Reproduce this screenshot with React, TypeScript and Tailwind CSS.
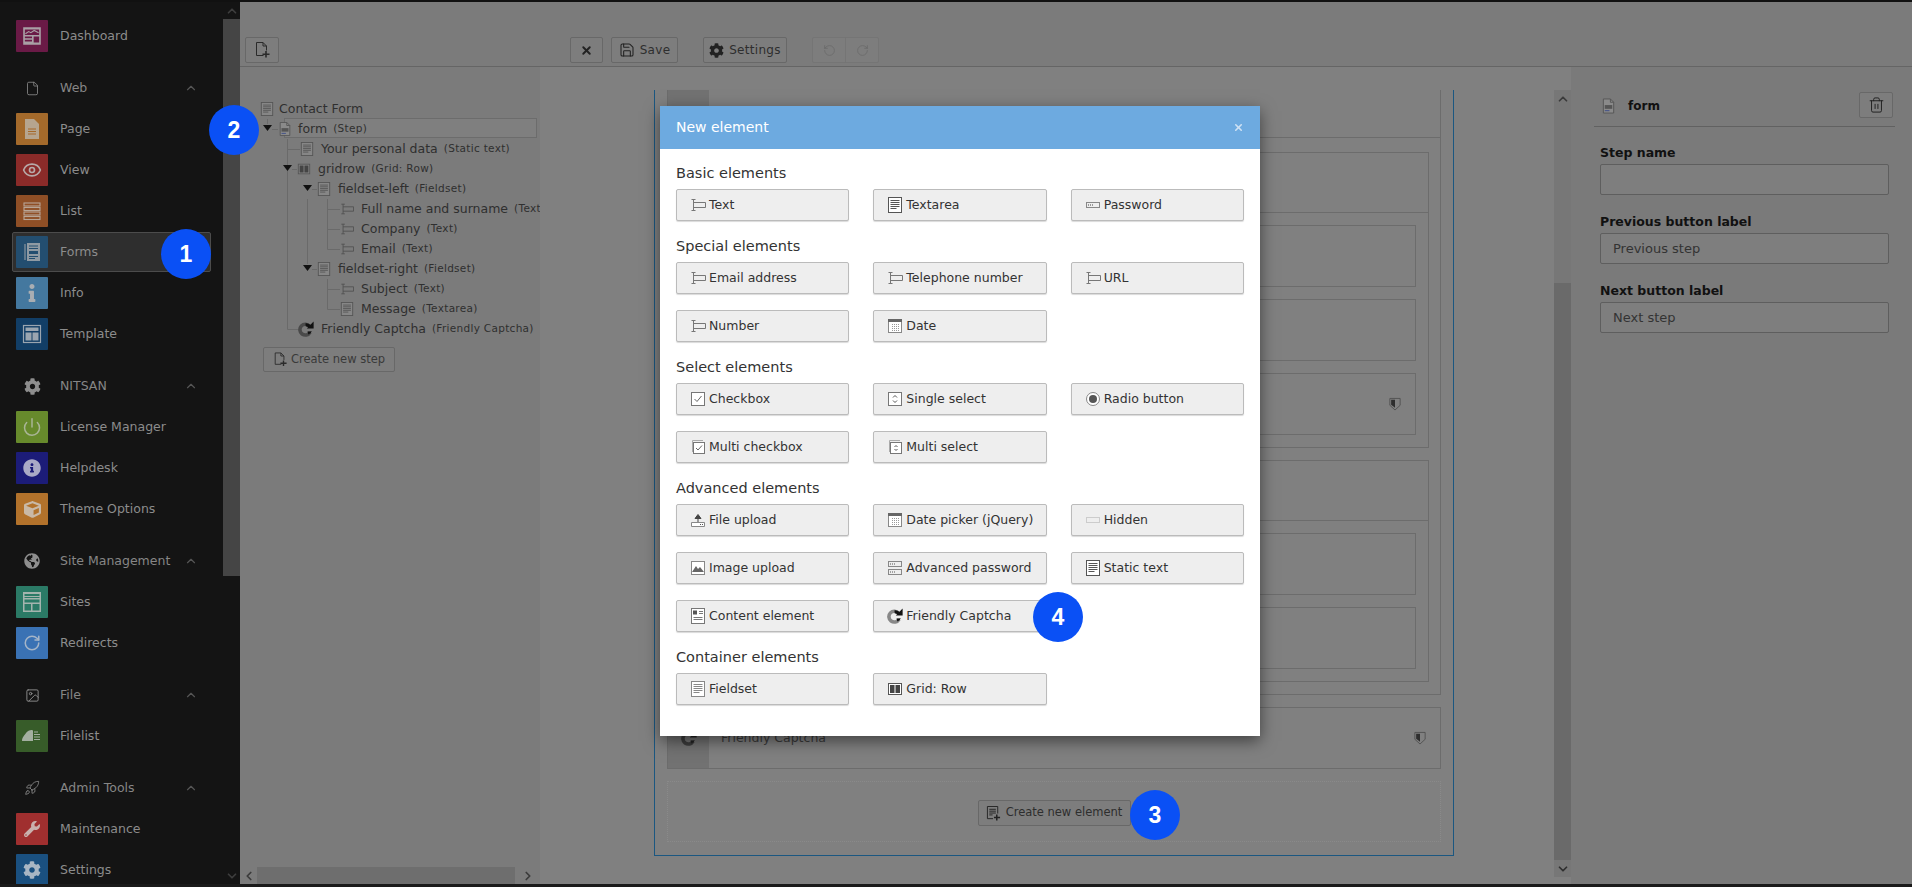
import React from 'react';
import { ChevronUp, ChevronDown, ChevronLeft, ChevronRight, Eye, File, Image, Power, RotateCcw, RotateCw, Rocket, Save, Trash2, X } from 'lucide-react';
import { FaCog, FaCube, FaGlobeAmericas, FaInfo, FaInfoCircle, FaWrench } from 'react-icons/fa';

const sans = "font-['DejaVu_Sans',sans-serif]";

type G = { className?: string };

// --- small form-element glyphs, 16 box ---
function IconField({ className, stroke = '#777' }: G & { stroke?: string }) {
  return (
    <svg viewBox="0 0 16 16" className={className} fill="none" stroke={stroke} strokeWidth="1">
      <path d="M3.5 5.5H15.5V10.5H3.5M3.5 2.5V13.5M1.5 2.5H5.5M1.5 13.5H5.5" />
    </svg>
  );
}
function IconLines({ className, dark, paper = '#fff' }: G & { dark?: boolean; paper?: string }) {
  const c = dark ? '#555' : '#888';
  return (
    <svg viewBox="0 0 16 16" className={className} fill="none" stroke={paper === '#fff' ? c : '#555'} strokeWidth="1">
      <rect x="1.5" y="0.5" width="13" height="15" fill={paper} />
      <path d="M3.5 3.5H12.5M3.5 5.5H12.5M3.5 7.5H12.5M3.5 9.5H12.5M3.5 11.5H9.5" />
    </svg>
  );
}
function IconPassword({ className }: G) {
  return (
    <svg viewBox="0 0 16 16" className={className} fill="none" stroke="#888" strokeWidth="1">
      <rect x="1.5" y="5.5" width="13" height="5" />
      <path d="M3 8H9" strokeDasharray="1 1" stroke="#444" />
    </svg>
  );
}
function IconDate({ className }: G) {
  return (
    <svg viewBox="0 0 16 16" className={className} fill="none">
      <rect x="1.5" y="1.5" width="13" height="13" fill="#fff" stroke="#888" />
      <rect x="1" y="1" width="14" height="3" fill="#666" />
      <path d="M5 6.5H13M5 8.5H13M5 10.5H13M5 12.5H13" stroke="#999" strokeDasharray="1 1" />
    </svg>
  );
}
function IconCheck({ className, multi }: G & { multi?: boolean }) {
  return (
    <svg viewBox="0 0 16 16" className={className} fill="none" stroke="#777">
      {multi && <path d="M2.5 13V1.5H13" stroke="#aaa" />}
      <rect x={multi ? 3.5 : 1.5} y={multi ? 3.5 : 1.5} width={multi ? 11 : 13} height={multi ? 11 : 13} fill="#fff" />
      <path d={multi ? 'M6 9L8 11L12 6.5' : 'M4.5 8L7 10.5L11.5 5'} stroke="#666" />
    </svg>
  );
}
function IconSelect({ className, multi }: G & { multi?: boolean }) {
  return (
    <svg viewBox="0 0 16 16" className={className} fill="none" stroke="#777">
      {multi && <path d="M2.5 13V1.5H13" stroke="#aaa" />}
      <rect x={multi ? 3.5 : 1.5} y={multi ? 3.5 : 1.5} width={multi ? 11 : 13} height={multi ? 11 : 13} fill="#fff" />
      <path d={multi ? 'M7.5 8L9 6.5L10.5 8M7.5 10L9 11.5L10.5 10' : 'M6 6.5L8 4.5L10 6.5M6 9.5L8 11.5L10 9.5'} stroke="#555" />
    </svg>
  );
}
function IconRadio({ className }: G) {
  return (
    <svg viewBox="0 0 16 16" className={className} fill="#fff" stroke="#888">
      <circle cx="8" cy="8" r="6.5" />
      <circle cx="8" cy="8" r="4" fill="#555" stroke="none" />
    </svg>
  );
}
function IconUpload({ className }: G) {
  return (
    <svg viewBox="0 0 16 16" className={className} fill="none" stroke="#888">
      <path d="M1.5 10.5V14.5H14.5V10.5H1.5" fill="#fff" />
      <path d="M8 10V4M5 6.5L8 2.5L11 6.5Z" stroke="#444" fill="#444" />
      <path d="M10 12.5H13" stroke="#555" strokeDasharray="1 1" />
    </svg>
  );
}
function IconHidden({ className }: G) {
  return (
    <svg viewBox="0 0 16 16" className={className} fill="none" stroke="#aaa">
      <rect x="1.5" y="5.5" width="13" height="5" strokeDasharray="1 1" />
    </svg>
  );
}
function IconPicture({ className }: G) {
  return (
    <svg viewBox="0 0 16 16" className={className} fill="none" stroke="#888">
      <rect x="1.5" y="1.5" width="13" height="13" fill="#fff" />
      <path d="M2 12L6 6L8 9L10 7L14 12Z" fill="#666" stroke="none" />
    </svg>
  );
}
function IconAdvPassword({ className }: G) {
  return (
    <svg viewBox="0 0 16 16" className={className} fill="none" stroke="#888">
      <rect x="1.5" y="1.5" width="13" height="5" />
      <rect x="1.5" y="9.5" width="13" height="5" />
      <path d="M3 4H8M3 12H8" stroke="#555" strokeDasharray="1 1" />
    </svg>
  );
}
function IconContent({ className }: G) {
  return (
    <svg viewBox="0 0 16 16" className={className} fill="none" stroke="#777">
      <rect x="1.5" y="0.5" width="13" height="15" fill="#fff" />
      <rect x="3" y="2.5" width="4" height="4" fill="#555" stroke="none" />
      <path d="M9 3.5H13M9 5.5H13M3.5 9.5H12.5M3.5 11.5H12.5" />
    </svg>
  );
}
function IconGrid({ className, paper = '#fff' }: G & { paper?: string }) {
  return (
    <svg viewBox="0 0 16 16" className={className} fill="none" stroke="#555">
      <rect x="1.5" y="2.5" width="13" height="11" fill={paper} />
      <rect x="3" y="4" width="4.5" height="8" fill="#444" stroke="none" />
      <rect x="8.5" y="4" width="4.5" height="8" fill="#444" stroke="none" />
    </svg>
  );
}
function IconCaptcha({ className, light = '#6a6a6a', dark = '#111' }: G & { light?: string; dark?: string }) {
  return (
    <svg viewBox="0 0 16 16" className={className} fill="none">
      <path d="M11.5 5.2A5.4 5.4 0 1 0 12 11.3" stroke={light} strokeWidth="3.6" />
      <path d="M7.6 4A5 5 0 0 1 11.5 5.2" stroke={dark} strokeWidth="3.2" />
      <path d="M15.6 0.6V7.6H8.8Z" fill={dark} />
      <path d="M9.5 10.4L13.8 10.2A5.4 5.4 0 0 1 10.4 13.6Z" fill={dark} />
    </svg>
  );
}
function IconPageForm({ className }: G) {
  return (
    <svg viewBox="0 0 16 16" className={className} fill="none" stroke="#555">
      <path d="M2.5 0.5H10L13.5 4V15.5H2.5Z" fill="#8a8a8a" />
      <path d="M10 0.5V4H13.5" />
      <rect x="4" y="7" width="8" height="4" fill="#555" stroke="none" />
      <path d="M4 13H9" stroke="#3a4a88" />
    </svg>
  );
}
function IconNewDoc({ className }: G) {
  return (
    <svg viewBox="0 0 16 16" className={className} fill="none" stroke="#2a2a2a" strokeWidth="1">
      <path d="M9.5 13.5H2.5V0.5H9L12.5 4V8.5M9 0.5V4H12.5" />
      <path d="M12 9V15.5M8.5 12.2H15.5" strokeWidth="1.6" />
    </svg>
  );
}
function IconNewElement({ className }: G) {
  return (
    <svg viewBox="0 0 16 16" className={className} fill="none" stroke="#222">
      <path d="M7.5 13.5H1.5V0.5H12.5V8M3.5 3.5H10.5M3.5 5.5H10.5M3.5 7.5H10.5M3.5 9.5H7" />
      <path d="M11.5 9V15.5M8.5 12.2H15" strokeWidth="1.6" />
    </svg>
  );
}
function IconShield({ className }: G) {
  return (
    <svg viewBox="0 0 14 16" className={className} fill="none" stroke="#4d4d4d">
      <path d="M1 1.5H13V9.5L7 15L1 9.5Z" />
      <path d="M2.5 3H7V12.5L2.5 8.8Z" fill="#2e2e2e" stroke="none" />
    </svg>
  );
}

// --- sidebar module glyphs ---
function SideDash({ className }: G) {
  return (
    <svg viewBox="0 0 20 20" className={className} fill="#a9a0a5">
      <path d="M2 2H18V18H2ZM3.5 4V9H16.5V4ZM3.5 10.5V12H10V10.5ZM3.5 13.5V15H10V13.5ZM11.5 10.5V16H16.5V10.5Z" fillRule="evenodd" />
      <path d="M4 8L7 6L9 7L12 5L16 7" stroke="#a9a0a5" fill="none" />
    </svg>
  );
}
function SidePage({ className }: G) {
  return (
    <svg viewBox="0 0 20 20" className={className}>
      <path d="M3 0H12L17 5V20H3Z" fill="#b6a58f" />
      <path d="M6 10H14M6 12.5H14M6 15H14" stroke="#a5692a" strokeWidth="1.2" />
    </svg>
  );
}
function SideList({ className }: G) {
  return (
    <svg viewBox="0 0 20 20" className={className} fill="none" stroke="#b8a596" strokeWidth="1.1">
      <rect x="2" y="2" width="16" height="3" />
      <rect x="2" y="6.5" width="16" height="3" />
      <rect x="2" y="11" width="16" height="3" />
      <rect x="2" y="15.5" width="16" height="3" />
    </svg>
  );
}
function SideForms({ className }: G) {
  return (
    <svg viewBox="0 0 20 20" className={className}>
      <path d="M3 2V18" stroke="#8a969f" strokeWidth="1.2" />
      <rect x="5" y="1" width="13" height="18" fill="#8f9aa3" />
      <path d="M7 4H16M7 6.5H16" stroke="#234e70" strokeWidth="1.1" />
      <rect x="7" y="9" width="9" height="3" fill="#234e70" />
      <path d="M7 14.5H16M7 16.5H13" stroke="#234e70" strokeWidth="1.1" />
    </svg>
  );
}
function SideTemplate({ className }: G) {
  return (
    <svg viewBox="0 0 20 20" className={className}>
      <rect x="1.5" y="1.5" width="17" height="17" fill="none" stroke="#9aa5b0" strokeWidth="1.2" />
      <rect x="3.5" y="3.5" width="13" height="3.5" fill="#9aa5b0" />
      <rect x="3.5" y="8.5" width="6" height="8" fill="#9aa5b0" />
      <rect x="10.5" y="8.5" width="6" height="8" fill="#9aa5b0" />
    </svg>
  );
}
function SideSites({ className }: G) {
  return (
    <svg viewBox="0 0 20 20" className={className} fill="#a4b4ae">
      <path d="M1 0H19V20H1ZM2.5 9V18.5H9V12H2.5ZM10.5 12V18.5H17.5V12ZM2.5 2V4H17.5V2ZM2.5 5V6H17.5V5ZM2.5 7.5V10.5H17.5V7.5Z" fillRule="evenodd" />
    </svg>
  );
}
function SideFilelist({ className }: G) {
  return (
    <svg viewBox="0 0 20 20" className={className} fill="#a3afa0">
      <path d="M0 15C0 11 3 9 4 7C6 4 11 3 11 5V15Z" />
      <path d="M12 6H16M12 8.5H18M12 11H18M12 13.5H18" stroke="#a3afa0" fill="none" />
    </svg>
  );
}

type Item = { label: string; bg: string; icon: React.ReactNode; active?: boolean };
type Group = { title?: string; head?: React.ReactNode; items: Item[] };

const glyph = 'w-5 h-5';
const groups: Group[] = [
  { items: [{ label: 'Dashboard', bg: 'bg-[#6a1a46]', icon: <SideDash className="w-[22px] h-[22px]" /> }] },
  {
    title: 'Web',
    head: <File className="w-[15px] h-[17px]" strokeWidth={1.3} />,
    items: [
      { label: 'Page', bg: 'bg-[#a46a2b]', icon: <SidePage className={glyph} /> },
      { label: 'View', bg: 'bg-[#8b2b29]', icon: <Eye className="w-[20px] h-[20px] text-[#b7a9a8]" strokeWidth={2} /> },
      { label: 'List', bg: 'bg-[#8f4f26]', icon: <SideList className={glyph} /> },
      { label: 'Forms', bg: 'bg-[#234e70]', icon: <SideForms className={glyph} />, active: true },
      { label: 'Info', bg: 'bg-[#44789f]', icon: <FaInfo className="w-[18px] h-[18px] text-[#a9aeb3]" /> },
      { label: 'Template', bg: 'bg-[#123e66]', icon: <SideTemplate className={glyph} /> },
    ],
  },
  {
    title: 'NITSAN',
    head: <FaCog className="w-[17px] h-[17px]" />,
    items: [
      { label: 'License Manager', bg: 'bg-[#678a2c]', icon: <Power className="w-[20px] h-[20px] text-[#a9b596]" strokeWidth={1.8} /> },
      { label: 'Helpdesk', bg: 'bg-[#1c1c78]', icon: <FaInfoCircle className="w-[18px] h-[18px] text-[#aaaac6]" /> },
      { label: 'Theme Options', bg: 'bg-[#b2722b]', icon: <FaCube className="w-[17px] h-[17px] text-[#c9b9a6]" /> },
    ],
  },
  {
    title: 'Site Management',
    head: <FaGlobeAmericas className="w-[16px] h-[16px]" />,
    items: [
      { label: 'Sites', bg: 'bg-[#2b7a66]', icon: <SideSites className={glyph} /> },
      { label: 'Redirects', bg: 'bg-[#3a72b4]', icon: <RotateCw className="w-[18px] h-[18px] text-[#a5b5c8]" strokeWidth={2} /> },
    ],
  },
  {
    title: 'File',
    head: <Image className="w-[15px] h-[15px]" strokeWidth={1.5} />,
    items: [{ label: 'Filelist', bg: 'bg-[#375c29]', icon: <SideFilelist className={glyph} /> }],
  },
  {
    title: 'Admin Tools',
    head: <Rocket className="w-[16px] h-[16px]" strokeWidth={1.2} />,
    items: [
      { label: 'Maintenance', bg: 'bg-[#a02f2f]', icon: <FaWrench className="w-[16px] h-[16px] text-[#c9b0ad]" /> },
      { label: 'Settings', bg: 'bg-[#1a5080]', icon: <FaCog className="w-[18px] h-[18px] text-[#a8b6c4]" /> },
    ],
  },
];

function SidebarItem({ item }: { item: Item }) {
  return (
    <div
      className={
        item.active
          ? 'relative h-[32px] mb-[9px] flex items-center pl-[16px] text-[#8c8c8c] text-[12.5px]'
          : 'h-[32px] mb-[9px] flex items-center pl-[16px] text-[#8c8c8c] text-[12.5px]'
      }
    >
      {item.active && <div className="absolute left-[12px] right-[12px] -top-[4px] -bottom-[4px] bg-[#2e2e2e] border border-[#4c4c4c] rounded-[2px]" />}
      <span className={`relative w-[32px] h-[32px] flex items-center justify-center rounded-[1px] ${item.bg}`}>{item.icon}</span>
      <span className="relative ml-[12px]">{item.label}</span>
    </div>
  );
}

function Sidebar() {
  return (
    <aside className="w-[240px] shrink-0 flex bg-[#141414] overflow-hidden">
      <div className="w-[223px] shrink-0 pt-[18px]">
        {groups.map((g, i) => (
          <div key={i}>
            {g.title && (
              <div className="h-[52px] pt-[2px] flex items-center pl-[16px] pr-[25px] text-[#868686] text-[12.5px]">
                <span className="w-[32px] flex justify-center text-[#8e8e8e]">{g.head}</span>
                <span className="ml-[12px] flex-1">{g.title}</span>
                <ChevronUp className="w-[14px] h-[14px] text-[#555]" strokeWidth={2} />
              </div>
            )}
            {g.items.map((it) => (
              <SidebarItem key={it.label} item={it} />
            ))}
          </div>
        ))}
      </div>
      <div className="w-[17px] shrink-0 flex flex-col items-center">
        <div className="h-[17px] flex items-center">
          <ChevronUp className="w-[14px] h-[14px] text-[#3d3d3d]" strokeWidth={3} />
        </div>
        <div className="w-full h-[557px] bg-[#454545]" />
        <div className="flex-1" />
        <div className="h-[17px] flex items-center">
          <ChevronDown className="w-[14px] h-[14px] text-[#3d3d3d]" strokeWidth={3} />
        </div>
      </div>
    </aside>
  );
}

function ToolBtn({ children, className = '', text = 'text-[12px] tracking-[0.3px]' }: { children: React.ReactNode; className?: string; text?: string }) {
  return (
    <button className={`flex items-center justify-center border border-[#686868] bg-[#7d7d7d] rounded-[2px] text-[#2e2e2e] ${text} ${className}`}>
      {children}
    </button>
  );
}

function Toolbar() {
  return (
    <div className="h-[65px] shrink-0 flex items-end bg-[#7b7b7b] border-b border-[#656565] pb-[3px]">
      <div className="w-[330px] shrink-0 pl-[5px]">
        <ToolBtn className="w-[34px] h-[26px]">
          <IconNewDoc className="w-[16px] h-[16px]" />
        </ToolBtn>
      </div>
      <ToolBtn className="w-[33px] h-[26px]">
        <X className="w-[13px] h-[13px] text-[#222]" strokeWidth={3.5} />
      </ToolBtn>
      <ToolBtn className="w-[67px] h-[26px] ml-[8px] gap-[5px]">
        <Save className="w-[16px] h-[16px] text-[#222]" strokeWidth={1.6} />
        Save
      </ToolBtn>
      <ToolBtn className="w-[84px] h-[26px] ml-[25px] gap-[5px]">
        <FaCog className="w-[15px] h-[15px] text-[#222]" />
        Settings
      </ToolBtn>
      <div className="flex ml-[25px]">
        <ToolBtn className="w-[34px] h-[26px] border-[#757575] rounded-r-none">
          <RotateCcw className="w-[13px] h-[13px] text-[#6a6a6a]" strokeWidth={1.5} />
        </ToolBtn>
        <ToolBtn className="w-[34px] h-[26px] -ml-px border-[#757575] rounded-l-none">
          <RotateCw className="w-[13px] h-[13px] text-[#6a6a6a]" strokeWidth={1.5} />
        </ToolBtn>
      </div>
    </div>
  );
}

// Tree rows: guide = svg path in row coordinates, x starts at 260 (row box 20px tall)
type TreeRow = {
  label: string;
  type?: string;
  width: number;
  guide?: string;
  arrow?: number;
  icon: React.ReactNode;
  gap?: number;
  selected?: boolean;
};
const ti = 'w-[14px] h-[14px] shrink-0';
const paper = '#868686';
const X0 = 260;
const p = (x: number) => x - X0 + 0.5;
const pipes = (...xs: number[]) => xs.map((x) => `M${p(x)} 0V20`).join('');
const tee = (x: number) => `M${p(x)} 0V20M${p(x)} 10.5H${p(x) + 13}`;
const ell = (x: number) => `M${p(x)} 0V10.5H${p(x) + 13}`;

const treeRows: TreeRow[] = [
  { label: 'Contact Form', width: 0, icon: <IconLines className={ti} paper={paper} />, guide: '', gap: 5 },
  { label: 'form', type: '(Step)', width: 18, arrow: 7, guide: `M7.5 0V5M12 10.5H18`, icon: <IconPageForm className={ti} />, gap: 6, selected: true },
  { label: 'Your personal data', type: '(Static text)', width: 40, guide: tee(287), icon: <IconLines className={ti} dark paper={paper} />, gap: 7 },
  { label: 'gridrow', type: '(Grid: Row)', width: 37, arrow: 27, guide: `${pipes(287)}M32 10.5H37`, icon: <IconGrid className={ti} paper={paper} />, gap: 7 },
  { label: 'fieldset-left', type: '(Fieldset)', width: 57, arrow: 47, guide: `${pipes(287)}M52 10.5H57`, icon: <IconLines className={ti} paper={paper} />, gap: 7 },
  { label: 'Full name and surname', type: '(Text)', width: 80, guide: pipes(287, 307) + tee(327), icon: <IconField className={ti} stroke="#505050" />, gap: 7 },
  { label: 'Company', type: '(Text)', width: 80, guide: pipes(287, 307) + tee(327), icon: <IconField className={ti} stroke="#505050" />, gap: 7 },
  { label: 'Email', type: '(Text)', width: 80, guide: pipes(287, 307) + ell(327), icon: <IconField className={ti} stroke="#505050" />, gap: 7 },
  { label: 'fieldset-right', type: '(Fieldset)', width: 57, arrow: 47, guide: `${pipes(287)}M${p(307)} 0V5M52 10.5H57`, icon: <IconLines className={ti} paper={paper} />, gap: 7 },
  { label: 'Subject', type: '(Text)', width: 80, guide: pipes(287) + tee(327), icon: <IconField className={ti} stroke="#505050" />, gap: 7 },
  { label: 'Message', type: '(Textarea)', width: 80, guide: pipes(287) + ell(327), icon: <IconLines className={ti} dark paper={paper} />, gap: 7 },
  { label: 'Friendly Captcha', type: '(Friendly Captcha)', width: 38, guide: ell(287), icon: <IconCaptcha className="w-[16px] h-[16px] shrink-0" light="#4a4a4a" />, gap: 7 },
];

function Tree() {
  return (
    <div className="w-[300px] shrink-0 flex flex-col bg-[#7b7b7b]">
      <div className="flex-1 overflow-hidden pl-[20px] pt-[32px]">
        {treeRows.map((r) => (
          <div key={r.label} className="h-[20px] flex items-center whitespace-nowrap text-[12.5px] text-[#2f2f2f] relative">
            {r.selected && <div className="absolute left-[24px] w-[253px] h-[20px] -top-px border border-[#6c6c6c] bg-[#7f7f7f]" />}
            {r.width > 0 && (
              <svg width={r.width} height={20} className="shrink-0 relative" fill="none" stroke="#6a6a6a">
                <path d={r.guide} />
                {r.arrow !== undefined && <path d={`M${r.arrow - 4} 6H${r.arrow + 5}L${r.arrow + 0.5} 12Z`} fill="#111" stroke="none" />}
              </svg>
            )}
            <span className="relative flex items-center">{r.icon}</span>
            <span className="relative" style={{ marginLeft: r.gap }}>
              {r.label}
            </span>
            {r.type && <span className="relative ml-[6px] text-[10.5px] tracking-[0.3px]">{r.type}</span>}
          </div>
        ))}
        <ToolBtn className="w-[132px] h-[25px] mt-[8px] ml-[3px] gap-[4px]" text="text-[11.5px] text-[#3a3a3a]">
          <IconNewDoc className="w-[14px] h-[15px]" />
          Create new step
        </ToolBtn>
      </div>
      <div className="h-[17px] shrink-0 flex items-center">
        <div className="w-[17px] flex justify-center">
          <ChevronLeft className="w-[14px] h-[14px] text-[#3b3b3b]" strokeWidth={3} />
        </div>
        <div className="w-[258px] h-full bg-[#6e6e6e]" />
        <div className="flex-1 flex justify-center">
          <ChevronRight className="w-[14px] h-[14px] text-[#3b3b3b]" strokeWidth={3} />
        </div>
      </div>
    </div>
  );
}

function Handle({ children }: { children?: React.ReactNode }) {
  return <div className="w-[41px] shrink-0 self-stretch bg-[#727272] flex items-center justify-center">{children}</div>;
}

function PlainCard({ shield }: { shield?: boolean }) {
  return (
    <div className="h-[62px] border border-[#6c6c6c] flex items-center justify-end pr-[14px]">
      {shield && <IconShield className="w-[12px] h-[14px]" />}
    </div>
  );
}

function Fieldset({ count, shieldLast }: { count: number; shieldLast?: boolean }) {
  return (
    <div className="border border-[#6c6c6c]">
      <div className="h-[60px] border-b border-[#6c6c6c]" />
      <div className="p-[12px] flex flex-col gap-[12px]">
        {Array.from({ length: count }).map((_, i) => (
          <PlainCard key={i} shield={shieldLast && i === count - 1} />
        ))}
      </div>
    </div>
  );
}

function Canvas() {
  return (
    <div className="w-[1014px] shrink-0 flex flex-col pt-[23px] pl-[114px]">
      <div className="w-[800px] h-[766px] border-[1.5px] border-t-0 border-[#1b5781] overflow-hidden px-[12px]">
        <div className="-mt-[14px]">
          <div className="border border-[#6c6c6c]">
            <div className="h-[61px] flex border-b border-[#6c6c6c]">
              <Handle>
                <IconGrid className="w-[15px] h-[15px] mt-[10px]" paper="#6f6f6f" />
              </Handle>
            </div>
            <div className="pt-[14px] pl-[13px] pr-[11px] pb-[12px] flex flex-col gap-[12px]">
              <Fieldset count={3} shieldLast />
              <Fieldset count={2} />
            </div>
          </div>
          <div className="h-[62px] mt-[12px] border border-[#6c6c6c] flex items-center">
            <Handle>
              <IconCaptcha className="w-[16px] h-[16px]" light="#3c3c3c" dark="#222" />
            </Handle>
            <span className="ml-[12px] flex-1 text-[12.5px] text-[#3a3a3a]">Friendly Captcha</span>
            <IconShield className="w-[12px] h-[14px] mr-[14px]" />
          </div>
          <div className="h-[61px] mt-[12px] border border-dotted border-[#8a8a8a] flex items-center justify-center pt-[3px]">
            <ToolBtn className="w-[153px] h-[26px] gap-[5px]" text="text-[11.5px]">
              <IconNewElement className="w-[15px] h-[15px]" />
              Create new element
            </ToolBtn>
          </div>
        </div>
      </div>
    </div>
  );
}

function CanvasScrollbar() {
  return (
    <div className="w-[17px] shrink-0 flex flex-col items-center mt-[23px]">
      <div className="w-full h-[193px] bg-[#777] flex justify-center pt-[2px]">
        <ChevronUp className="w-[14px] h-[14px] text-[#3b3b3b]" strokeWidth={3} />
      </div>
      <div className="w-full h-[577px] bg-[#6a6a6a]" />
      <div className="w-full h-[17px] bg-[#777] flex justify-center items-center">
        <ChevronDown className="w-[14px] h-[14px] text-[#2f2f2f]" strokeWidth={3} />
      </div>
    </div>
  );
}

function Field({ label, value }: { label: string; value?: string }) {
  return (
    <div className="mb-[7px]">
      <label className="block h-[31px] leading-[18px] pt-[11px] text-[12.5px] font-bold text-[#111]">{label}</label>
      <div className="h-[31px] border border-[#5e5e5e] rounded-[2px] bg-[#7e7e7e] px-[12px] flex items-center text-[13px] text-[#333]">{value}</div>
    </div>
  );
}

function Inspector() {
  return (
    <div className="flex-1 bg-[#7a7a7a] pl-[23px] pr-[17px] pt-[25px]">
      <div className="h-[35px] flex items-start border-b border-[#616161] pl-[7px] pr-[2px]">
        <IconPageForm className="w-[15px] h-[16px] mt-[6px]" />
        <span className="ml-[12px] mt-[5px] flex-1 text-[12px] font-bold text-[#111]">form</span>
        <ToolBtn className="w-[34px] h-[26px]">
          <Trash2 className="w-[17px] h-[18px] text-[#222]" strokeWidth={1.4} />
        </ToolBtn>
      </div>
      <div className="pl-[6px] pr-[6px] pt-[6px]">
        <Field label="Step name" />
        <Field label="Previous button label" value="Previous step" />
        <Field label="Next button label" value="Next step" />
      </div>
    </div>
  );
}

type El = { label: string; icon: React.ReactNode };
const ei = 'w-[16px] h-[16px] shrink-0';
const sections: { title: string; rows: El[] }[] = [
  {
    title: 'Basic elements',
    rows: [
      { label: 'Text', icon: <IconField className={ei} /> },
      { label: 'Textarea', icon: <IconLines className={ei} dark /> },
      { label: 'Password', icon: <IconPassword className={ei} /> },
    ],
  },
  {
    title: 'Special elements',
    rows: [
      { label: 'Email address', icon: <IconField className={ei} /> },
      { label: 'Telephone number', icon: <IconField className={ei} /> },
      { label: 'URL', icon: <IconField className={ei} /> },
      { label: 'Number', icon: <IconField className={ei} /> },
      { label: 'Date', icon: <IconDate className={ei} /> },
    ],
  },
  {
    title: 'Select elements',
    rows: [
      { label: 'Checkbox', icon: <IconCheck className={ei} /> },
      { label: 'Single select', icon: <IconSelect className={ei} /> },
      { label: 'Radio button', icon: <IconRadio className={ei} /> },
      { label: 'Multi checkbox', icon: <IconCheck className={ei} multi /> },
      { label: 'Multi select', icon: <IconSelect className={ei} multi /> },
    ],
  },
  {
    title: 'Advanced elements',
    rows: [
      { label: 'File upload', icon: <IconUpload className={ei} /> },
      { label: 'Date picker (jQuery)', icon: <IconDate className={ei} /> },
      { label: 'Hidden', icon: <IconHidden className={ei} /> },
      { label: 'Image upload', icon: <IconPicture className={ei} /> },
      { label: 'Advanced password', icon: <IconAdvPassword className={ei} /> },
      { label: 'Static text', icon: <IconLines className={ei} dark /> },
      { label: 'Content element', icon: <IconContent className={ei} /> },
      { label: 'Friendly Captcha', icon: <IconCaptcha className={ei} light="#888" /> },
    ],
  },
  {
    title: 'Container elements',
    rows: [
      { label: 'Fieldset', icon: <IconLines className={ei} /> },
      { label: 'Grid: Row', icon: <IconGrid className={ei} /> },
    ],
  },
];

function Modal() {
  return (
    <div className="absolute left-[660px] top-[106px] w-[600px] bg-white shadow-[0_5px_15px_rgba(0,0,0,0.5)]">
      <div className="h-[43px] bg-[#6daae0] flex items-center justify-between px-[16px] text-white">
        <span className="text-[14px]">New element</span>
        <X className="w-[11px] h-[11px] text-[#cfe2f4]" strokeWidth={3.5} />
      </div>
      <div className="px-[16px] pt-[15px] pb-[15px]">
        {sections.map((s) => (
          <div key={s.title}>
            <h4 className="h-[25px] leading-[19px] text-[14.5px] text-[#333]">{s.title}</h4>
            <div className="grid grid-cols-3 gap-x-[24px]">
              {s.rows.map((el) => (
                <button
                  key={el.label}
                  className="h-[32px] mb-[16px] flex items-center pl-[13px] gap-[3px] bg-[#eeeeee] border border-[#bbbbbb] rounded-[2px] shadow-[0_1px_1px_rgba(0,0,0,0.15)] text-[12.5px] text-[#333] whitespace-nowrap"
                >
                  {el.icon}
                  {el.label}
                </button>
              ))}
            </div>
          </div>
        ))}
      </div>
    </div>
  );
}

function Badge({ n, className }: { n: number; className: string }) {
  return (
    <div className={`absolute w-[50px] h-[50px] rounded-full bg-[#0a50f5] text-white flex items-center justify-center font-bold text-[23px] font-['Liberation_Sans',sans-serif] ${className}`}>
      {n}
    </div>
  );
}

export default function App() {
  return (
    <div className={`relative w-[1912px] h-[887px] overflow-hidden flex flex-col bg-[#111] ${sans}`}>
      <div className="h-[2px] shrink-0 bg-[#111]" />
      <div className="flex-1 flex min-h-0">
        <Sidebar />
        <div className="flex-1 flex flex-col min-w-0 bg-[#808080]">
          <Toolbar />
          <div className="flex-1 flex min-h-0">
            <Tree />
            <Canvas />
            <CanvasScrollbar />
            <Inspector />
          </div>
        </div>
      </div>
      <div className="h-[3px] shrink-0 bg-[#1a1a1a]" />
      <Modal />
      <Badge n={1} className="left-[161px] top-[229px]" />
      <Badge n={2} className="left-[209px] top-[105px]" />
      <Badge n={3} className="left-[1130px] top-[790px]" />
      <Badge n={4} className="left-[1033px] top-[592px]" />
    </div>
  );
}
